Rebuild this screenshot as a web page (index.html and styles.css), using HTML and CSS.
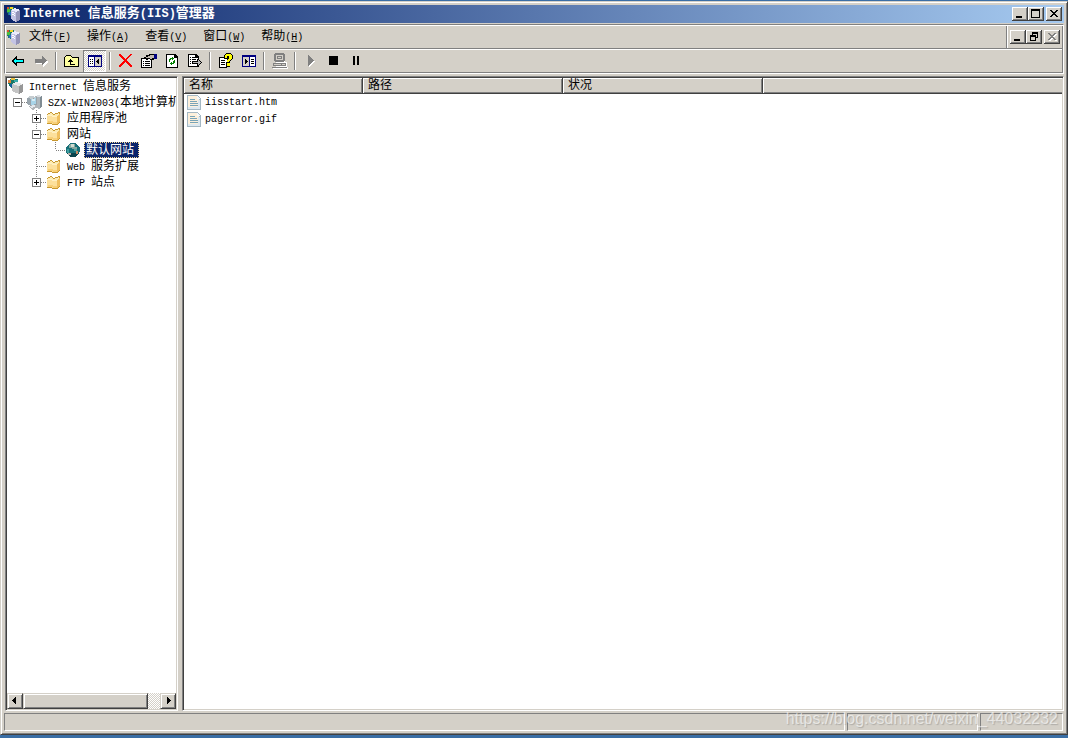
FILE: index.html
```html
<!DOCTYPE html>
<html lang="zh-CN">
<head>
<meta charset="utf-8">
<title>Internet 信息服务(IIS)管理器</title>
<link rel="stylesheet" href="styles.css">
</head>
<body>
<svg class="defs" aria-hidden="true">
  <symbol id="iis" viewBox="0 0 16 16">
    <path fill="#1c7c6c" d="M1 2h2V1h5v1h1v6H7v2H4V9H2V7H1z"/>
    <path fill="#4cbf3c" d="M1 3h3v3H1z"/><path fill="#f0d428" d="M4 1h3v2H4z"/><path fill="#d8542c" d="M1 1h2v2H1z"/><path fill="#2c6cc4" d="M3 6h2v3H3z"/>
    <path fill="#8c8cac" d="M5 4l4-2 5 2v10l-4 2-5-3z"/>
    <path fill="#ececfc" d="M5 4l4-2 5 2-4 2z"/><path fill="#c4c4e4" d="M5 4l5 2v10l-5-3z"/>
    <path fill="#fff" d="M6 6l3 1v1L6 7zM6 8l3 1v1L6 9z"/><path fill="#9494b8" d="M10 6l4-2v10l-4 2z"/>
  </symbol>
  <symbol id="root" viewBox="0 0 16 16">
    <path fill="#187868" d="M0 2h2V1h8v6H6v3H3V8H1V6H0z"/><path fill="#e08038" d="M0 2h3v3H0z"/><path fill="#e8c040" d="M3 0h4v2H3z"/><path fill="#38a8a8" d="M6 2h4v2H6z"/><path fill="#1860a0" d="M2 6h2v3H2z"/>
    <path fill="#c4c4c4" d="M4 6l4-2 7 2v8l-4 2-7-3z"/><path fill="#e8e8e8" d="M4 6l4-2 7 2-4 2z"/><path fill="#989898" d="M11 8l4-2v8l-4 2z"/>
  </symbol>
  <symbol id="computer" viewBox="0 0 16 16">
    <path fill="#b0b8bc" d="M8 2l3-1 4 1v11l-3 2-4-2z"/><path fill="#dce0e4" d="M8 2l3-1 4 1-3 1z"/><path fill="#808c94" d="M13 3l2-1v11l-2 1z"/>
    <path fill="#98a4ac" d="M0 4l3-2 7 1v8l-6 1-4-2z"/><path fill="#c4ccd0" d="M0 4l3-2 7 1-5 2z"/><path fill="#a8d4e8" d="M4 5l5-1v6l-5 1z"/><path fill="#d8ecf4" d="M5 5h3v2H5z"/>
    <path fill="#b0b4b8" d="M1 12l6-1 4 2-5 3z"/><path fill="#e4e8ec" d="M2 12l5-1 2 1-4 2z"/>
  </symbol>
  <symbol id="folder" viewBox="0 0 16 16">
    <path fill="#c89830" d="M1 4l4-2 2 2 7-2v10l-3 3-10-1z"/>
    <path fill="#fcecb4" d="M2 4l3-1 2 2 6-2v3H2z"/>
    <path fill="#fce09c" d="M1 6l10 1v7L1 13z"/><path fill="#fff0c4" d="M1 5l10 1v1L1 6z"/>
    <path fill="#f0c060" d="M11 7l3-4v8l-3 3z"/><path fill="#f8d078" d="M2 11l9 1v2l-9-1z"/>
  </symbol>
  <symbol id="globe" viewBox="0 0 16 16">
    <circle cx="8" cy="8" r="7" fill="#187078"/><path fill="#0c444c" d="M2 11h12l-3 4H5z"/>
    <path fill="#88a8a0" d="M5 2h5v3h2v2H8L6 6H4V4z"/><path fill="#d0dcd0" d="M6 2h3v3H6z"/><path fill="#3c9c9c" d="M2 7h2v4H2z"/>
    <path fill="#c88c64" d="M11 9h2v3h-2z"/><path fill="#58a4a0" d="M9 7h3v2H9z"/><path fill="#b8b0a8" d="M3 11h3v2H3z"/>
  </symbol>
  <symbol id="file" viewBox="0 0 16 16">
    <path fill="#a4b8c4" d="M1 0h10l4 4v11H1z"/><path fill="#fdf0dc" d="M2 1h8l3 3v8H2z"/><path fill="#dce8f0" d="M2 12h12v2H2zM12 5h2v8h-2z"/>
    <path fill="#f4f8fc" d="M11 1v3h3z"/><path fill="#78a4b8" d="M4 4h5v1H4zM4 6h7v1H4zM4 8h8v1H4zM4 10h8v1H4z"/>
  </symbol>
  <symbol id="plus" viewBox="0 0 19 16">
    <path fill="none" stroke="#808080" stroke-dasharray="1 1" d="M9.500 0V16M10 8.500H19"/>
    <path fill="#fff" stroke="#808080" d="M5.500 4.500h8v8h-8z"/><path fill="#000" d="M7 8h5v1H7zM9 6h1v5H9z"/>
  </symbol>
  <symbol id="plus-end" viewBox="0 0 19 16">
    <path fill="none" stroke="#808080" stroke-dasharray="1 1" d="M9.500 0V8M10 8.500H19"/>
    <path fill="#fff" stroke="#808080" d="M5.500 4.500h8v8h-8z"/><path fill="#000" d="M7 8h5v1H7zM9 6h1v5H9z"/>
  </symbol>
  <symbol id="minus" viewBox="0 0 19 16">
    <path fill="none" stroke="#808080" stroke-dasharray="1 1" d="M9.500 0V16M10 8.500H19"/>
    <path fill="#fff" stroke="#808080" d="M5.500 4.500h8v8h-8z"/><path fill="#000" d="M7 8h5v1H7z"/>
  </symbol>
  <symbol id="minus-only" viewBox="0 0 19 16">
    <path fill="none" stroke="#808080" stroke-dasharray="1 1" d="M10 8.500H19"/>
    <path fill="#fff" stroke="#808080" d="M5.500 4.500h8v8h-8z"/><path fill="#000" d="M7 8h5v1H7z"/>
  </symbol>
  <symbol id="line" viewBox="0 0 19 16"><path fill="none" stroke="#808080" stroke-dasharray="1 1" d="M9.500 0V16"/></symbol>
  <symbol id="tee" viewBox="0 0 19 16"><path fill="none" stroke="#808080" stroke-dasharray="1 1" d="M9.500 0V16M10 8.500H19"/></symbol>
  <symbol id="elbow" viewBox="0 0 19 16"><path fill="none" stroke="#808080" stroke-dasharray="1 1" d="M9.500 0V8M10 8.500H19"/></symbol>
  <symbol id="min" viewBox="0 0 12 10"><path d="M2 7h6v2H2z"/></symbol>
  <symbol id="max" viewBox="0 0 12 10"><path fill-rule="evenodd" d="M1 0h9v9H1zM2 2v6h7V2z"/></symbol>
  <symbol id="restore" viewBox="0 0 12 10"><path fill-rule="evenodd" d="M4 0h6v6H8V5h1V2H5v1H4zM2 3h6v6H2zM3 5v3h4V5z"/></symbol>
  <symbol id="close" viewBox="0 0 12 10"><path d="M2 1h2v1h1v1h2V2h1V1h2v1H9v1H8v1H7v1h1v1h1v1h1v1H8V7H7V6H5v1H4v1H2V7h1V6h1V5h1V4H4V3H3V2H2z"/></symbol>
</svg>

<div class="window">
  <header class="titlebar">
    <svg class="icon"><use href="#iis"/></svg>
    <h1 class="title"><span class="latin">Internet </span>信息服务<span class="latin">(IIS)</span>管理器</h1>
    <div class="controls">
      <button class="control" aria-label="最小化"><svg><use href="#min"/></svg></button>
      <button class="control" aria-label="最大化"><svg><use href="#max"/></svg></button>
      <button class="control control-close" aria-label="关闭"><svg><use href="#close"/></svg></button>
    </div>
  </header>

  <div class="rebar">
    <div class="menubar">
      <svg class="icon"><use href="#iis"/></svg>
      <nav class="menus">
        <button class="menu">文件<span class="latin">(<u>F</u>)</span></button>
        <button class="menu">操作<span class="latin">(<u>A</u>)</span></button>
        <button class="menu">查看<span class="latin">(<u>V</u>)</span></button>
        <button class="menu">窗口<span class="latin">(<u>W</u>)</span></button>
        <button class="menu">帮助<span class="latin">(<u>H</u>)</span></button>
      </nav>
      <div class="controls child-controls">
        <button class="control" aria-label="最小化子窗口"><svg><use href="#min"/></svg></button>
        <button class="control" aria-label="还原子窗口"><svg><use href="#restore"/></svg></button>
        <button class="control control-close" aria-label="关闭子窗口" disabled><svg><use href="#close"/></svg></button>
      </div>
    </div>
    <div class="toolbar">
      <button class="tool" aria-label="后退"><svg class="icon" viewBox="0 0 16 16"><path d="M1 8h1V7h1V6h1V5h1V4h1V3h1v3h7v4H7v3H6v-1H5v-1H4v-1H3V9H2V8z"/><path fill="#0ff" d="M3 8h1V7h1V6h1v1h7v2H6v1H5V9H4V8z"/></svg></button>
      <button class="tool" aria-label="前进"><svg class="icon" viewBox="0 0 16 16"><path fill="#fff" d="M3 7h7V4l5 4v1l-5 5v-3H3z"/><path fill="#808080" d="M2 6h7V3h1v1h1v1h1v1h1v1h1v1h-1v1h-1v1h-1v1h-1v1H9v-2H2z"/></svg></button>
      <span class="separator"></span>
      <button class="tool" aria-label="向上一级"><svg class="icon" viewBox="0 0 16 16"><path d="M0 4h1V3h1V2h5v1h1v1h7v10H0z"/><path fill="#ffffa0" d="M2 3h5v1h1v1h6v8H1V4h1z"/><path d="M4 8h1V7h1V6h1v1h1v1h1v1H7v2h4v1H6V9H4z"/></svg></button>
      <button class="tool tool-pressed" aria-label="显示控制台树"><svg class="icon" viewBox="0 0 16 16"><path fill="#000080" d="M1 2h14v12H1z"/><path fill="#fff" d="M2 4h5v9H2z"/><path fill="#d4d0c8" d="M8 4h6v9H8z"/><path d="M3 6h1v1H3zM5 6h1v1H5zM3 8h1v1H3zM5 8h1v1H5zM3 10h1v1H3zM5 10h1v1H5zM9 8h1V7h1V6h1v5h-1v-1h-1V9H9z"/></svg></button>
      <span class="separator"></span>
      <button class="tool" aria-label="删除"><svg class="icon" viewBox="0 0 16 16"><path fill="#f00" d="M1 1h2v1h1v1h1v1h1v1h1v1h1V5h1V4h1V3h1V2h1V1h2v1h-1v1h-1v1h-1v1h-1v1H9v2h1v1h1v1h1v1h1v1h1v2h-2v-1h-1v-1h-1v-1H9v-1H8V9H7v1H6v1H5v1H4v1H3v1H1v-2h1v-1h1v-1h1V9h1V8h1V7H5V6H4V5H3V4H2V3H1z"/></svg></button>
      <button class="tool" aria-label="属性"><svg class="icon" viewBox="0 0 16 16"><path d="M0 5h11v10H0z"/><path fill="#fff" d="M1 6h9v8H1z"/><path d="M2 8h1v1H2zM4 8h5v1H4zM2 10h1v1H2zM4 10h5v1H4zM2 12h1v1H2zM4 12h5v1H4zM3 4h2V2h3V1h5v6H9V6H7v1H5V6H3z"/><path fill="#c0b8b0" d="M5 4h2V3h2V2h4v3h-2v1H9V5H5z"/><path fill="#000080" d="M13 1h3v5h-3z"/></svg></button>
      <button class="tool" aria-label="刷新"><svg class="icon" viewBox="0 0 16 16"><path d="M2 1h9l3 3v11H2z"/><path fill="#fff" d="M3 2h7v3h3v9H3z"/><path d="M10 2h1v2h2v1h-3z"/><path fill="#008000" d="M5 6h1V5h2V4h1v1h1v1H9v1H8V6H7v1H6v2H5zM10 7h1v3h-1v1H8v1H7v-1H6v-1h1V9h1v1h1V8h1z"/></svg></button>
      <button class="tool" aria-label="导出列表"><svg class="icon" viewBox="0 0 16 16"><path d="M1 1h8l3 3v10H1z"/><path fill="#fff" d="M2 2h6v3h3v8H2z"/><path d="M3 4h1v1H3zM5 4h3v1H5zM3 6h1v1H3zM5 6h4v1H5zM3 8h1v1H3zM5 8h5V6h2v1h1v1h1v1h1v1h-1v1h-1v1h-1v1h-2v-2H5zM3 10h1v1H3z"/><path fill="#b8b8b8" d="M6 9h5V7l3 3-3 2v-2H6z"/></svg></button>
      <span class="separator"></span>
      <button class="tool" aria-label="帮助"><svg class="icon" viewBox="0 0 16 16"><path d="M1 4h8v11H1z"/><path fill="#fff" d="M2 5h7v9H2z"/><path d="M3 7h4v1H3zM3 9h4v1H3zM3 11h4v1H3zM6 2h1V1h1V0h5v1h1v1h1v4h-1v1h-1v1h-1v6H8V9h1V6H6z"/><path fill="#ff0" d="M7 2h1V1h5v1h1v4h-1v1h-1v1h-1v1H9V7h1V6h1V3H9v2H7zM9 10h3v3H9z"/></svg></button>
      <button class="tool" aria-label="操作窗格"><svg class="icon" viewBox="0 0 16 16"><path fill="#000080" d="M1 2h14v12H1z"/><path fill="#d4d0c8" d="M2 4h6v9H2z"/><path fill="#fff" d="M9 4h5v9H9z"/><path d="M4 6h1v1h1v1h1v1H6v1H5v1H4zM10 6h3v1h-3zM10 8h3v1h-3zM10 10h3v1h-3z"/></svg></button>
      <span class="separator"></span>
      <button class="tool" aria-label="连接" disabled><svg class="icon" viewBox="0 0 16 16"><path fill="#fff" d="M4 1h9v8h2v5h1v2H1v-2h3z"/><path fill="#808080" d="M3 0h9v1h1v7h-1v1H3V8H2V1h1z"/><path fill="#d4d0c8" d="M4 2h7v5H4z"/><path fill="#808080" d="M5 3h5v3H5zM1 10h13v3H1zM0 14h15v1H0z"/><path fill="#d4d0c8" d="M6 4h3v1H6zM2 11h7v1H2zM10 11h3v1h-3z"/></svg></button>
      <span class="separator"></span>
      <button class="tool" aria-label="启动" disabled><svg class="icon" viewBox="0 0 16 16"><path fill="#fff" d="M6 3v11l6-5z"/><path fill="#808080" d="M5 2h1v1h1v1h1v1h1v1h1v1h1v1h-1v1H9v1H8v1H7v1H6v1H5z"/></svg></button>
      <button class="tool" aria-label="停止"><svg class="icon" viewBox="0 0 16 16"><path d="M3 3h9v9H3z"/></svg></button>
      <button class="tool" aria-label="暂停"><svg class="icon" viewBox="0 0 16 16"><path d="M4 3h2v9H4zM8 3h2v9H8z"/></svg></button>
    </div>
  </div>

  <main class="panes">
    <section class="pane tree-pane" aria-label="控制台树">
      <div class="tree" role="tree">
        <div class="node" role="treeitem"><svg class="icon"><use href="#root"/></svg><span class="label"><span class="latin">Internet </span>信息服务</span></div>
        <div class="node" role="treeitem"><svg class="branch"><use href="#minus-only"/></svg><svg class="icon"><use href="#computer"/></svg><span class="label"><span class="latin">SZX-WIN2003(</span>本地计算机</span></div>
        <div class="node" role="treeitem"><span class="branch"></span><svg class="branch"><use href="#plus"/></svg><svg class="icon"><use href="#folder"/></svg><span class="label">应用程序池</span></div>
        <div class="node" role="treeitem"><span class="branch"></span><svg class="branch"><use href="#minus"/></svg><svg class="icon"><use href="#folder"/></svg><span class="label">网站</span></div>
        <div class="node" role="treeitem" aria-selected="true"><span class="branch"></span><svg class="branch"><use href="#line"/></svg><svg class="branch"><use href="#elbow"/></svg><svg class="icon"><use href="#globe"/></svg><span class="label label-selected">默认网站</span></div>
        <div class="node" role="treeitem"><span class="branch"></span><svg class="branch"><use href="#tee"/></svg><svg class="icon"><use href="#folder"/></svg><span class="label"><span class="latin">Web </span>服务扩展</span></div>
        <div class="node" role="treeitem"><span class="branch"></span><svg class="branch"><use href="#plus-end"/></svg><svg class="icon"><use href="#folder"/></svg><span class="label"><span class="latin">FTP </span>站点</span></div>
      </div>
      <div class="scrollbar">
        <button class="scroll-button" aria-label="向左滚动"><svg viewBox="0 0 8 8"><path d="M1 4V3h1V2h1V1h1V0h1v7H4V6H3V5H2V4z"/></svg></button>
        <div class="scroll-thumb"></div>
        <div class="scroll-track"></div>
        <button class="scroll-button" aria-label="向右滚动"><svg viewBox="0 0 8 8"><path d="M3 0h1v1h1v1h1v1h1v1H6v1H5v1H4v1H3z"/></svg></button>
      </div>
    </section>
    <section class="pane list-pane" aria-label="内容">
      <table class="list">
        <colgroup><col class="col-name"><col class="col-path"><col class="col-status"><col></colgroup>
        <thead><tr><th>名称</th><th>路径</th><th>状况</th><th></th></tr></thead>
        <tbody>
          <tr><td><div class="file"><svg class="icon"><use href="#file"/></svg><span class="latin">iisstart.htm</span></div></td><td></td><td></td><td></td></tr>
          <tr><td><div class="file"><svg class="icon"><use href="#file"/></svg><span class="latin">pagerror.gif</span></div></td><td></td><td></td><td></td></tr>
        </tbody>
      </table>
    </section>
  </main>

  <footer class="statusbar">
    <div class="status status-main"></div>
    <div class="status status-middle"></div>
    <div class="status status-end"></div>
    <span class="watermark">https://blog.csdn.net/weixin_44032232</span>
  </footer>
</div>
</body>
</html>
```
FILE: styles.css
```css
* {
  box-sizing: border-box;
}

body {
  margin: 0;
  height: 100vh;
  padding: 1px 0 3px;
  background: #3a6ea5;
  color: #000;
  font: 12px/18px "Liberation Mono", "Noto Sans CJK SC", monospace;
  overflow: hidden;
}

button {
  margin: 0;
  padding: 0;
  border: 0;
  background: none;
  color: inherit;
  font: inherit;
}

svg {
  display: block;
  flex: none;
  shape-rendering: crispEdges;
}

.defs {
  position: absolute;
  width: 0;
  height: 0;
}

.icon {
  width: 16px;
  height: 16px;
}

.latin {
  font-size: 10px;
  white-space: pre;
}

.window {
  display: flex;
  flex-direction: column;
  height: 100%;
  padding: 3px;
  background: #d4d0c8;
  border: 1px solid;
  border-color: #d4d0c8 #404040 #404040 #d4d0c8;
  box-shadow: inset 1px 1px #fff, inset -1px -1px #808080;
}

.titlebar {
  display: flex;
  align-items: center;
  height: 18px;
  padding: 0 2px;
  background: linear-gradient(to right, #0a246a, #a6caf0);
  color: #fff;
}

.title {
  flex: 1;
  margin: 0 0 0 1px;
  font-size: 13px;
  line-height: 20px;
  font-weight: bold;
  white-space: nowrap;
}

.title .latin {
  font-size: 12px;
}

.controls {
  display: flex;
}

.control {
  display: flex;
  width: 16px;
  height: 14px;
  padding: 2px;
  background: #d4d0c8;
  box-shadow: inset -1px -1px #404040, inset 1px 1px #fff, inset -2px -2px #808080;
}

.control svg {
  width: 12px;
  height: 10px;
}

.control-close {
  margin-left: 2px;
}

.control:disabled svg {
  fill: #808080;
  filter: drop-shadow(1px 1px #fff);
}

.rebar {
  margin-top: 1px;
  padding: 1px;
  border: 1px solid;
  border-color: #808080 #fff #fff #808080;
  box-shadow: inset 1px 1px #fff, inset -1px -1px #808080;
}

.menubar {
  display: flex;
  align-items: center;
  height: 24px;
  border-bottom: 1px solid #fff;
  box-shadow: inset 0 -1px #808080;
}

.menubar > .icon {
  margin-bottom: 2px;
}

.menus {
  display: flex;
  flex: 1;
  margin-left: -1px;
}

.menu {
  padding: 0 8px;
  line-height: 22px;
  white-space: nowrap;
}

.child-controls {
  align-self: flex-start;
  align-items: center;
  height: 22px;
  padding: 0 2px 0 3px;
  border-left: 1px solid #808080;
  box-shadow: inset 1px 0 #fff;
}

.toolbar {
  display: flex;
  align-items: center;
  height: 22px;
}

.tool {
  display: flex;
  align-items: center;
  justify-content: center;
  width: 23px;
  height: 22px;
}

.tool-pressed {
  background: repeating-conic-gradient(#fff 0 25%, #d4d0c8 0 50%) 0 0 / 2px 2px;
  box-shadow: inset 1px 1px #808080, inset -1px -1px #fff;
}

.separator {
  width: 2px;
  height: 18px;
  margin: 0 3px;
  border-left: 1px solid #808080;
  border-right: 1px solid #fff;
}

.panes {
  display: flex;
  flex: 1;
  gap: 4px;
  min-height: 0;
  padding: 2px 0 0 1px;
}

.pane {
  padding: 1px;
  background: #fff;
  border: 1px solid;
  border-color: #808080 #fff #fff #808080;
  box-shadow: inset 1px 1px #404040, inset -1px -1px #d4d0c8;
}

.tree-pane {
  display: flex;
  flex-direction: column;
  flex: none;
  width: 173px;
}

.tree {
  flex: 1;
  padding-left: 1px;
  overflow: hidden;
}

.node {
  display: flex;
  height: 16px;
}

.branch {
  flex: none;
  width: 19px;
  height: 16px;
}

.label {
  height: 16px;
  margin-left: 3px;
  padding: 0 2px;
  white-space: nowrap;
}

.label-selected {
  padding-right: 5px;
  background: #0a246a;
  color: #fff;
  outline: 1px dotted #f5db95;
  outline-offset: -1px;
}

.scrollbar {
  display: flex;
  height: 16px;
}

.scroll-button,
.scroll-thumb {
  background: #d4d0c8;
  border: 1px solid;
  border-color: #d4d0c8 #404040 #404040 #d4d0c8;
  box-shadow: inset 1px 1px #fff, inset -1px -1px #808080;
}

.scroll-button {
  display: flex;
  align-items: center;
  justify-content: center;
  width: 16px;
  height: 16px;
}

.scroll-button svg {
  width: 8px;
  height: 8px;
}

.scroll-thumb {
  flex: 10;
}

.scroll-track {
  flex: 1;
  background: repeating-conic-gradient(#fff 0 25%, #d4d0c8 0 50%) 0 0 / 2px 2px;
}

.list-pane {
  flex: 1;
  min-width: 0;
}

.list {
  width: 100%;
  border-collapse: collapse;
  table-layout: fixed;
}

.col-name {
  width: 179px;
}

.col-path,
.col-status {
  width: 200px;
}

.list th {
  height: 16px;
  padding: 1px 5px 0;
  background: #d4d0c8;
  box-shadow: inset -1px -1px #404040, inset 1px 1px #fff, inset -2px -2px #808080;
  font-weight: normal;
  line-height: 15px;
  text-align: left;
}

.list th:last-child {
  box-shadow: inset 0 -1px #404040, inset 1px 1px #fff, inset 0 -2px #808080;
}

.list td {
  padding: 0;
}

.file {
  display: flex;
  align-items: center;
  gap: 3px;
  height: 17px;
  padding-left: 2px;
}

.statusbar {
  position: relative;
  display: flex;
  gap: 2px;
  height: 20px;
  padding: 2px 1px 0 0;
}

.status {
  border: 1px solid;
  border-color: #808080 #fff #fff #808080;
}

.status-main {
  flex: 1;
}

.status-middle {
  width: 131px;
}

.status-end {
  width: 83px;
}

.watermark {
  position: absolute;
  right: 6px;
  bottom: 3px;
  color: rgba(255, 255, 255, 0.6);
  font: 16px/18px "Liberation Sans", sans-serif;
  text-shadow: 1px 1px 1px rgba(120, 120, 120, 0.4);
}
```
